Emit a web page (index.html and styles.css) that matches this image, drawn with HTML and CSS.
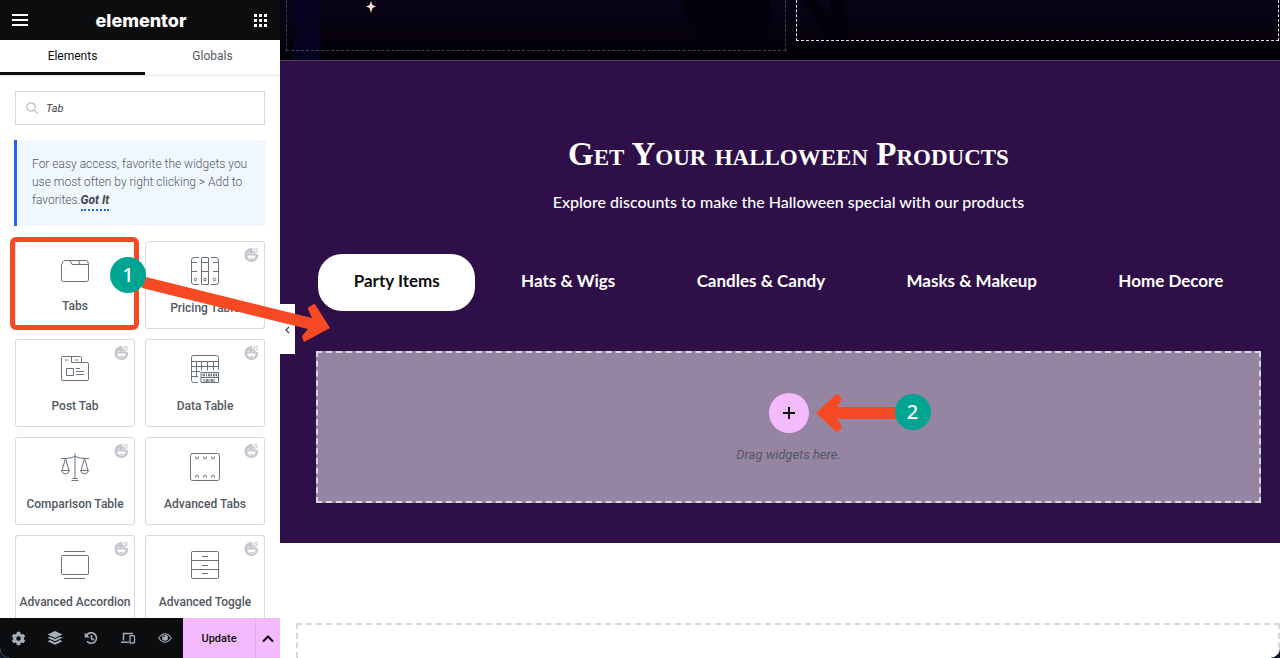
FILE: index.html
```html
<!DOCTYPE html>
<html lang="en">
  <head>
    <meta charset="UTF-8" />
    <meta name="viewport" content="width=device-width, initial-scale=1.0" />
    <title>Elementor</title>
    <link rel="stylesheet" href="styles.css">
  </head>
  <body>
    <div class="editor">
      <aside class="panel">
        <header class="panel-header">
          <button type="button" class="icon-button" aria-label="Menu">
            <svg width="16" height="12" viewBox="0 0 16 12"><path d="M0 1h16M0 6h16M0 11h16" stroke="#fff" stroke-width="2" /></svg>
          </button>
          <div class="logo">elementor</div>
          <button type="button" class="icon-button" aria-label="Widgets">
            <svg width="13" height="13" viewBox="0 0 13 13" fill="#fff"><path d="M0 0h3v3H0zM5 0h3v3H5zM10 0h3v3h-3zM0 5h3v3H0zM5 5h3v3H5zM10 5h3v3h-3zM0 10h3v3H0zM5 10h3v3H5zM10 10h3v3h-3z" /></svg>
          </button>
        </header>

        <nav class="panel-nav">
          <button type="button" class="nav-tab active">Elements</button>
          <button type="button" class="nav-tab">Globals</button>
        </nav>

        <div class="panel-content">
          <div class="search">
            <svg class="search-icon" width="12" height="12" viewBox="0 0 12 12" fill="none" stroke="#babfc5" stroke-width="1.2"><circle cx="5" cy="5" r="4.2" /><path d="M8 8l3.5 3.5" /></svg>
            <input type="text" class="search-input" value="Tab" aria-label="Search widget" />
          </div>

          <div class="notice">
            For easy access, favorite the widgets you use most often by right clicking &gt; Add to favorites.<a href="#" class="notice-link">Got It</a>
          </div>

          <div class="widgets">
            <button type="button" class="widget">
              <svg class="widget-icon short" viewBox="0 1 28 26"><path d="M.5 9L2 5.500Q2.500 4.500 4 4.500H25q1.500 0 2 1.500l.5 3v14.500q0 2-2 2h-23q-2 0-2-2zM9 4.500l2 4h16.500M17.500 4.500l1.500 4" /></svg>
              <span>Tabs</span>
              <span class="highlight"></span>
            </button>
            <button type="button" class="widget">
              <svg class="widget-badge"><use href="#face" /></svg>
              <svg class="widget-icon" viewBox="0 0 28 28"><path d="M8 .5H3Q.5.5.5 3v22q0 2.500 2.500 2.500h5M.5 5.500H6M.5 14.500H6M10.500.5h7v27h-7zM10.500 5.500h7M10.500 14.500h7M20 .5h5q2.500 0 2.500 2.500v22q0 2.500-2.500 2.500h-5M22 5.500h5.500M22 14.500h5.500" /><circle cx="4.500" cy="22.500" r="1.300" /><circle cx="14" cy="22.500" r="1.300" /><circle cx="23.500" cy="22.500" r="1.300" /></svg>
              <span>Pricing Table</span>
            </button>
            <button type="button" class="widget">
              <svg class="widget-badge"><use href="#face" /></svg>
              <svg class="widget-icon" viewBox="0 0 28 28"><path d="M1.500 1.500h18q1 0 1 1V7.500H26q1.500 0 1.500 1.500V24q0 1.500-1.500 1.500H2Q.5 25.500.5 24V2.500q0-1 1-1zM10.500 1.500v6h10M4 5h3M14 5h3M5.500 13.500h7v7h-7zM15 13.500h4M15 16.500h8M15 19.500h8" /></svg>
              <span>Post Tab</span>
            </button>
            <button type="button" class="widget">
              <svg class="widget-badge"><use href="#face" /></svg>
              <svg class="widget-icon" viewBox="0 0 28 28"><path d="M7 27.500H2.500q-2 0-2-2v-23q0-2 2-2h23q2 0 2 2V15M.5 6.500h27M.5 11.500h27M.5 16.500H9M.5 21.500H7M5.500 6.500v16M10.500 6.500v9M16.500 6.500v9M22.500 6.500v9M10 17.500h17.500v10H10zM10 22.500h17.500M15.500 18.500v3M20.500 18.500v3M25.500 18.500v3M13 24v3M18 24v3M23 24v3" /><path d="M12 19h1.500v2H12zM17.500 19H19v2h-1.500zM22.500 19H24v2h-1.500zM15 24.500h1.500v2H15zM20 24.500h1.500v2H20z" /></svg>
              <span>Data Table</span>
            </button>
            <button type="button" class="widget">
              <svg class="widget-badge"><use href="#face" /></svg>
              <svg class="widget-icon" viewBox="0 0 28 28"><path d="M14 .5v25M11.500 25.500h5M10.500 27.500h7M0 5.500h4q5 0 10-2 5 2 10 2h4M4.500 5.500L1 17.500M4.500 5.500L8 17.500M23.500 5.500L20 17.500M23.500 5.500L27 17.500M.5 17.500h8q-1 3.500-4 3.500t-4-3.500zM19.500 17.500h8q-1 3.500-4 3.500t-4-3.500z" /></svg>
              <span>Comparison Table</span>
            </button>
            <button type="button" class="widget">
              <svg class="widget-badge"><use href="#face" /></svg>
              <svg class="widget-icon" viewBox="0 0 28 28"><rect x="-.5" y=".5" width="29" height="27" rx="2" /><path d="M4.500 3.500q0 2.500 1.500 2.500t1.500-2.500M12.500 3.500q0 2.500 1.500 2.500t1.500-2.500M20.500 3.500q0 2.500 1.500 2.500t1.500-2.500M4.500 24.500Q4.500 22 6 22t1.500 2.500M12.500 24.500Q12.500 22 14 22t1.500 2.500M20.500 24.500Q20.500 22 22 22t1.500 2.500" /></svg>
              <span>Advanced Tabs</span>
            </button>
            <button type="button" class="widget">
              <svg class="widget-badge"><use href="#face" /></svg>
              <svg class="widget-icon" viewBox="0 0 28 28"><rect x=".5" y="4.500" width="27" height="19" rx="1" /><path d="M3 .5h21M3 27.500h21" /></svg>
              <span>Advanced Accordion</span>
            </button>
            <button type="button" class="widget">
              <svg class="widget-badge"><use href="#face" /></svg>
              <svg class="widget-icon" viewBox="0 0 28 28"><rect x=".5" y=".5" width="27" height="27" rx="1" /><path d="M.5 9.500h27M.5 18.500h27M11 5.500h6M11 14.500h6M11 22.500h6" /></svg>
              <span>Advanced Toggle</span>
            </button>
          </div>
        </div>

        <footer class="panel-footer">
          <div class="tools">
            <button type="button" class="tool" aria-label="Settings">
              <svg width="15" height="15" viewBox="0 0 14 14"><path fill-rule="evenodd" d="M5.500.8h3l.4 1.800 1.100.7 1.800-.6 1.500 2.500L12 6.400v1.300l1.300 1.200-1.500 2.500-1.800-.6-1.100.7-.4 1.800h-3l-.4-1.800-1.100-.7-1.800.6L.7 8.900 2 7.700V6.400L.7 5.200l1.500-2.500 1.800.6 1.100-.7zM7 4.900a2.100 2.100 0 1 0 0 4.200 2.100 2.100 0 0 0 0-4.200z" /></svg>
            </button>
            <button type="button" class="tool" aria-label="Structure">
              <svg width="16" height="14" viewBox="0 0 16 14"><path d="M8 0l7.500 3.500L8 7 .5 3.500zM.5 6.800L3 5.700l5 2.400 5-2.400 2.500 1.100L8 10.300zM.5 10.200L3 9.100l5 2.400 5-2.400 2.500 1.100L8 13.700z" /></svg>
            </button>
            <button type="button" class="tool" aria-label="History">
              <svg width="14" height="14" viewBox="0 0 14 14"><path class="line" d="M2.500 4.500a5.300 5.300 0 1 1 .5 5.800M7.500 4v3.500L10 9" stroke-width="1.600" /><path d="M.7 1.500v5h5z" /></svg>
            </button>
            <button type="button" class="tool" aria-label="Responsive mode">
              <svg width="15" height="12" viewBox="0 0 15 12"><path class="line" d="M2.500 8.500v-7H12M0 10.300h8" stroke-width="1.500" /><rect class="line" x="9" y="3.700" width="4.500" height="7.300" rx=".8" stroke-width="1.300" /></svg>
            </button>
            <button type="button" class="tool" aria-label="Preview">
              <svg width="14" height="10" viewBox="0 0 14 10"><path class="line" d="M.6 5Q7-3.400 13.400 5 7 13.400.6 5z" stroke-width="1.100" /><circle cx="7" cy="4.800" r="3" /><path class="glint" d="M5.200 4.500Q5.400 3 7 3" /></svg>
            </button>
          </div>
          <button type="button" class="update">Update</button>
          <button type="button" class="update-more" aria-label="Save options">
            <svg width="12" height="8" viewBox="0 0 12 8"><path d="M1 6.500l5-5 5 5" fill="none" stroke="#0c0d0e" stroke-width="2" /></svg>
          </button>
        </footer>

        <button type="button" class="collapse" aria-label="Hide panel">
          <svg width="5" height="8" viewBox="0 0 5 8"><path d="M4 1L1 4l3 3" fill="none" stroke="#3f444b" stroke-width="1.200" /></svg>
        </button>

        <svg class="arrow-one" width="190" height="70" viewBox="142 274 190 70"><path d="M142 276l170 42-4-9q-.5-1.500 1-2l4-2.500q1.500-1 2.500.5L330 328l-25 13.500q-1 .5-1.500-.5l-1.500-5 6-7-166-41z" /></svg>
        <span class="step step-one">1</span>
      </aside>

      <main class="preview">
        <section class="hero">
          <svg class="hero-art" width="1000" height="60" viewBox="0 0 1000 60">
            <path d="M12 0h26l3 60H12l3-28z" fill="#090120" />
            <path d="M402 0h88v38h-76z" fill="#04010a" />
            <path d="M524 0q10 18 18 32l2 20h22q4-16-2-52h-14l2 18L536 0z" fill="#04010a" />
            <path d="M91 1l1.500 4 3.500 1.500-3.500 1.500L91 13l-1.500-5L86 6.500 89.500 5z" fill="#fcdccc" />
          </svg>
          <div class="hero-column"></div>
          <div class="hero-column selected"></div>
        </section>

        <section class="products">
          <h2 class="title">Get Your halloween Products</h2>
          <p class="subtitle">Explore discounts to make the Halloween special with our products</p>

          <div class="tabs">
            <button type="button" class="tab active">Party Items</button>
            <button type="button" class="tab">Hats &amp; Wigs</button>
            <button type="button" class="tab">Candles &amp; Candy</button>
            <button type="button" class="tab">Masks &amp; Makeup</button>
            <button type="button" class="tab">Home Decore</button>
          </div>

          <div class="drop-area">
            <div class="add-row">
              <button type="button" class="add" aria-label="Add widget">
                <svg width="12" height="12" viewBox="0 0 12 12"><path d="M6 0v12M0 6h12" stroke="#0c0d0e" stroke-width="2" /></svg>
              </button>
              <svg class="arrow-two" width="82" height="40" viewBox="816 392 82 40"><path d="M816 412l20-18.500q1-1 2 0l3.500 3.500q1 1 0 2l-4.500 7h61v12h-61l4.500 7q1 1 0 2l-3.500 3.500q-1 1-2 0z" /></svg>
              <span class="step step-two">2</span>
            </div>
            <p class="drop-text">Drag widgets here.</p>
          </div>
        </section>

        <section class="new-section">
          <div class="new-area"></div>
        </section>
      </main>
    </div>

    <svg width="0" height="0" class="symbols">
      <symbol id="face" viewBox="0 0 14 14">
        <path d="M7.500 1A6.500 6.500 0 1 0 13.400 7L11 6.300 10.300 4 8 3.300z" fill="#c4c8cc" />
        <path d="M9 .8l.9 1.700 2 .8.600 2M11.300.8l1.500 1.500" fill="none" stroke="#c4c8cc" />
        <path d="M3 8h8q-.8 3.800-4 3.800T3 8z" fill="#fff" />
        <path d="M5.200 10.800q1.800-1.500 3.600 0-1.800 1.200-3.600 0z" fill="#c4c8cc" />
        <path d="M3.300 6.200q1-1.600 2 0M7.700 6.200q1-1.600 2 0" stroke="#fff" stroke-width=".8" fill="none" />
      </symbol>
    </svg>
  </body>
</html>
```
FILE: styles.css
```css
* {
  box-sizing: border-box;
}

body {
  margin: 0;
  background-color: #0b1a2e;
  font-family: Roboto, "Liberation Sans", sans-serif;
}

button {
  padding: 0;
  border: none;
  background: none;
  color: inherit;
  font-family: inherit;
  cursor: pointer;
}

.symbols {
  position: absolute;
}

.editor {
  display: flex;
  height: 100vh;
  overflow: hidden;
  border-radius: 0 0 10px 10px;
}

/* Left panel */
.panel {
  position: relative;
  z-index: 1;
  display: flex;
  flex-direction: column;
  flex: 0 0 280px;
  background-color: #fff;
}

.panel-header {
  display: flex;
  align-items: center;
  justify-content: space-between;
  flex: 0 0 40px;
  padding: 0 13px 0 12px;
  background-color: #0c0d0e;
}

.icon-button {
  display: flex;
}

.logo {
  color: #fff;
  font-family: Inter, sans-serif;
  font-size: 18px;
  font-weight: 800;
}

.panel-nav {
  display: flex;
  flex: 0 0 36px;
  border-bottom: 1px solid #e6e8ea;
}

.nav-tab {
  flex: 1;
  padding-bottom: 1px;
  border-bottom: 3px solid transparent;
  color: #515962;
  font-size: 12px;
}

.nav-tab.active {
  flex: 0 0 145px;
  border-bottom-color: #0c0d0e;
  color: #0c0d0e;
}

.panel-content {
  flex: 1;
  min-height: 0;
  padding: 15px 15px 0;
  overflow: hidden;
}

.search {
  display: flex;
  align-items: center;
  gap: 8px;
  height: 34px;
  padding: 0 10px;
  border: 1px solid #d5d8dc;
}

.search-input {
  flex: 1;
  min-width: 0;
  padding: 0;
  border: none;
  outline: none;
  color: #3f444b;
  font-family: inherit;
  font-size: 11px;
  font-style: italic;
}

.notice {
  min-height: 86px;
  margin: 15px -1px;
  padding: 15px;
  border-left: 3px solid #2563eb;
  border-radius: 0 3px 3px 0;
  background-color: #f0f7ff;
  color: #515962;
  font-size: 12px;
  font-weight: 300;
  line-height: 18px;
}

.notice-link {
  padding-bottom: 2px;
  border-bottom: 2px dotted #2563eb;
  color: #3f444b;
  font-style: italic;
  font-weight: 700;
  text-decoration: none;
}

.widgets {
  display: grid;
  grid-template-columns: 1fr 1fr;
  gap: 10px;
}

.widget {
  position: relative;
  display: flex;
  flex-direction: column;
  align-items: center;
  gap: 14px;
  height: 88px;
  padding-top: 15px;
  border: 1px solid #d5d8dc;
  border-radius: 3px;
  color: #515962;
  font-size: 12px;
  font-weight: 500;
  line-height: 18px;
  white-space: nowrap;
}

.widget-icon {
  width: 28px;
  height: 28px;
  overflow: visible;
  fill: none;
  stroke: #69727d;
  stroke-width: 1;
}

.widget-icon.short {
  height: 26px;
}

.widget-badge {
  position: absolute;
  top: 5px;
  right: 5px;
  width: 15px;
  height: 15px;
}

.highlight {
  position: absolute;
  top: -5px;
  right: -5px;
  bottom: -2px;
  left: -6px;
  border: 5px solid #f64a24;
  border-radius: 6px;
}

.panel-footer {
  display: flex;
  flex: 0 0 40px;
  background-color: #0c0d0e;
}

.tools {
  display: flex;
  flex: 1;
}

.tool {
  display: flex;
  align-items: center;
  justify-content: center;
  flex: 1;
}

.tool svg {
  fill: #a4afb7;
}

.tool .line {
  fill: none;
  stroke: #a4afb7;
}

.tool .glint {
  fill: none;
  stroke: #0c0d0e;
}

.update {
  flex: 0 0 72px;
  background-color: #f3bafd;
  color: #0c0d0e;
  font-size: 11px;
  font-weight: 500;
}

.update-more {
  flex: 0 0 25px;
  border-left: 1px solid #eaa8f6;
  background-color: #f3bafd;
}

.collapse {
  position: absolute;
  top: 304px;
  left: 100%;
  width: 15px;
  height: 50px;
  background-color: #fff;
}

/* Numbered steps */
.step {
  position: absolute;
  width: 36px;
  height: 36px;
  border-radius: 50%;
  background-color: #00a591;
  color: #fff;
  font-family: "Noto Sans", sans-serif;
  font-size: 20px;
  font-weight: 500;
  line-height: 36px;
  text-align: center;
}

.step-one {
  top: 257px;
  left: 110px;
}

.arrow-one,
.arrow-two {
  position: absolute;
  fill: #f64a24;
}

.arrow-one {
  top: 274px;
  left: 142px;
}

.arrow-two {
  top: 0;
  left: 47px;
}

.step-two {
  top: 1px;
  left: 126px;
}

/* Page preview */
.preview {
  display: flex;
  flex-direction: column;
  flex: 1;
  min-width: 0;
  background-color: #fff;
}

.hero {
  position: relative;
  display: flex;
  align-items: flex-start;
  gap: 10px;
  flex: 0 0 61px;
  padding: 0 1px 0 6px;
  overflow: hidden;
  border-bottom: 1px solid #563c62;
  background: linear-gradient(#080416, #07020f 50%, #020005);
}

.hero-art {
  position: absolute;
  top: 0;
  left: 0;
}

.hero-column {
  position: relative;
  flex: 500;
  height: 51px;
  border: 1px dashed #45414c;
  border-top: none;
}

.hero-column.selected {
  flex: 483;
  height: 41px;
  border-color: #e6e4e8;
}

.products {
  padding: 71px 19px 40px 36px;
  background-color: #2e0f47;
  color: #fff;
  text-align: center;
}

.title {
  margin: 0;
  font-family: "Liberation Serif", serif;
  font-size: 33px;
  font-variant: small-caps;
  font-weight: 700;
  line-height: 44px;
}

.subtitle {
  margin: 14px 0 40px;
  font-family: Lato, sans-serif;
  font-size: 16px;
  font-weight: 500;
  line-height: 24px;
}

.tabs {
  display: flex;
  gap: 10px;
  padding: 0 2px;
}

.tab {
  flex: 1 1 auto;
  height: 57px;
  padding: 0 35px 4px;
  border-radius: 24px;
  font-family: Lato, sans-serif;
  font-size: 17px;
  font-weight: 700;
  white-space: nowrap;
}

.tab.active {
  background-color: #fff;
  color: #0c0d0e;
}

.drop-area {
  display: flex;
  flex-direction: column;
  align-items: center;
  margin-top: 40px;
  padding: 40px 0 37px;
  border: 2px dashed #d5d8dc;
  background-color: #9684a3;
}

.add-row {
  position: relative;
}

.add {
  display: flex;
  align-items: center;
  justify-content: center;
  width: 40px;
  height: 40px;
  border-radius: 50%;
  background-color: #f3bafd;
}

.drop-text {
  margin: 13px 0 0;
  color: #515962;
  font-size: 13px;
  font-style: italic;
  line-height: 18px;
}

.new-section {
  display: flex;
  flex: 1;
  padding: 80px 0 0 16px;
}

.new-area {
  flex: 1;
  border: 2px dashed #d5d8dc;
  border-bottom: none;
}
```
